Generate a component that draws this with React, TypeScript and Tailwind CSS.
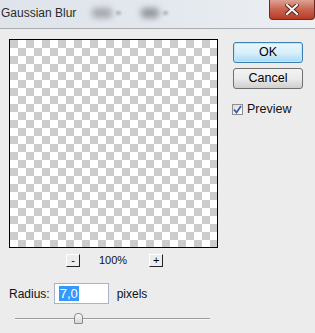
import React from 'react';

const font = { fontFamily: '"Liberation Sans", Arial, sans-serif' };

// old-style 3D mini button used for zoom out / zoom in
const ZoomButton: React.FC<{ label: string }> = ({ label }) => (
  <div className="w-[14px] h-[13px] flex items-center justify-center border-t border-l border-white border-r border-b border-r-[#222] border-b-[#222] bg-[#ececec] text-[11px] leading-none text-black">
    {label}
  </div>
);

export default function App() {
  return (
    <div className="w-[315px] h-[333px] bg-[#ececec] flex flex-col overflow-hidden text-[#111]" style={font}>
      {/* Title bar */}
      <div className="relative h-[29px] shrink-0 bg-gradient-to-r from-[#dfe4ea] via-[#e3e8ee] to-[#ecf0f4] border-b border-[#a9adb2] flex items-center">
        <span className="pl-[1px] text-[12px] text-[#2a2a2a] -mt-[2px]">Gaussian Blur</span>
        <div className="absolute left-[92px] top-[8px] w-[20px] h-[10px] rounded bg-[#8a8d92] blur-[3px] opacity-70" />
        <div className="absolute left-[116px] top-[11px] w-[5px] h-[4px] bg-[#9a9ea3] blur-[1px] opacity-60" />
        <div className="absolute left-[141px] top-[8px] w-[18px] h-[10px] rounded bg-[#6f7277] blur-[3px] opacity-70" />
        <div className="absolute left-[163px] top-[11px] w-[5px] h-[4px] bg-[#9a9ea3] blur-[1px] opacity-60" />
        <div className="absolute right-0 top-0 w-[46px] h-[20px] rounded-b-[4px] border border-t-0 border-[#6e2a20] bg-gradient-to-b from-[#dca193] via-[#c9634f] to-[#b83a22] flex items-center justify-center">
          <svg width="14" height="11" viewBox="0 0 14 11">
            <path d="M2 1 L12 10 M12 1 L2 10" stroke="#5a1e14" strokeWidth="4" strokeLinecap="square" />
            <path d="M2 1 L12 10 M12 1 L2 10" stroke="#f4f4f4" strokeWidth="2.2" strokeLinecap="square" />
          </svg>
        </div>
      </div>

      {/* Body */}
      <div className="flex flex-1">
        {/* Left column */}
        <div className="flex flex-col pl-[9px] pt-[10px] w-[224px]">
          <div className="w-[209px] h-[209px] border border-black bg-[conic-gradient(#fff_25%,#cccccc_0_50%,#fff_0_75%,#cccccc_0)] bg-[length:16px_16px]" />

          <div className="flex items-center mt-[6px] h-[13px]">
            <div className="ml-[57px]">
              <ZoomButton label="-" />
            </div>
            <span className="ml-[19px] text-[11px] leading-none">100%</span>
            <div className="ml-[22px]">
              <ZoomButton label="+" />
            </div>
          </div>

          <div className="flex items-center mt-[16px] h-[21px]">
            <span className="text-[12px]">Radius:</span>
            <div className="ml-[4px] w-[55px] h-[21px] bg-white border border-[#a3b6cc] flex items-center pl-[4px]">
              <span className="bg-[#3399ff] text-white text-[13px] leading-[15px] px-[1px]">7,0</span>
            </div>
            <span className="ml-[8px] text-[12px]">pixels</span>
          </div>

          <div className="relative mt-[9px] ml-[6px] w-[195px] h-[11px] flex items-center">
            <div className="w-full h-[2px] border-t border-[#9a9a9a] border-b border-b-[#f8f8f8]" />
            <div className="absolute left-[59px] top-0 w-[9px] h-[11px] rounded-t-[4px] rounded-b-[1px] border border-[#8a8a8a] bg-gradient-to-b from-[#fafafa] to-[#d6d6d6]" />
          </div>
        </div>

        {/* Right column */}
        <div className="flex flex-col pt-[13px] pl-[9px]">
          <button className="w-[70px] h-[21px] rounded-[3px] border border-[#3c7fb1] bg-gradient-to-b from-[#eaf6fd] via-[#d9f0fc] to-[#a7d9f5] shadow-[inset_0_0_0_1px_#bfe6fb] text-[12.5px] text-black leading-none">
            OK
          </button>
          <button className="mt-[5px] w-[70px] h-[21px] rounded-[3px] border border-[#707070] bg-gradient-to-b from-[#f2f2f2] via-[#ebebeb] to-[#cfcfcf] text-[12.5px] text-black leading-none">
            Cancel
          </button>
          <div className="flex items-center mt-[11px] -ml-[1px]">
            <div className="w-[11px] h-[11px] border border-[#8e8f8f] bg-gradient-to-br from-[#dcdcdc] to-white flex items-center justify-center">
              <svg width="9" height="9" viewBox="0 0 9 9">
                <path d="M1 4.5 L3.5 7.5 L8 1" fill="none" stroke="#3a5ea8" strokeWidth="1.8" />
              </svg>
            </div>
            <span className="ml-[4px] text-[12.5px]">Preview</span>
          </div>
        </div>
      </div>
    </div>
  );
}
